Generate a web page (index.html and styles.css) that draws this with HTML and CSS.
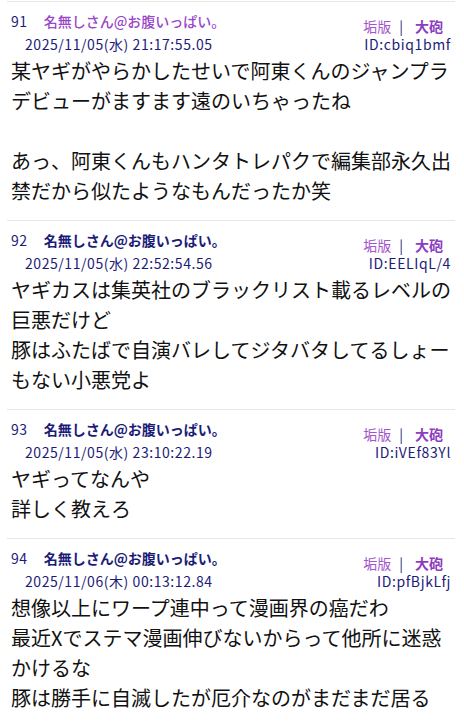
FILE: index.html
```html
<!DOCTYPE html>
<html lang="ja">
<head>
<meta charset="utf-8">
<title>thread</title>
<link rel="stylesheet" href="styles.css">
</head>
<body>
<div class="thread">
  <div class="post">
    <div class="head">
      <div class="meta">
        <div class="line1"><span class="num">91</span><span class="name name-mail">名無しさん@お腹いっぱい。</span></div>
        <div class="date">2025/11/05(水) 21:17:55.05</div>
      </div>
      <div class="side">
        <div class="links"><span class="l1">垢版</span><span class="bar">|</span><span class="l2">大砲</span></div>
        <div class="uid">ID:cbiq1bmf</div>
      </div>
    </div>
    <div class="body">某ヤギがやらかしたせいで阿東くんのジャンプラ<br>デビューがますます遠のいちゃったね<br><br>あっ、阿東くんもハンタトレパクで編集部永久出<br>禁だから似たようなもんだったか笑</div>
  </div>
  <div class="post">
    <div class="head">
      <div class="meta">
        <div class="line1"><span class="num">92</span><span class="name">名無しさん@お腹いっぱい。</span></div>
        <div class="date">2025/11/05(水) 22:52:54.56</div>
      </div>
      <div class="side">
        <div class="links"><span class="l1">垢版</span><span class="bar">|</span><span class="l2">大砲</span></div>
        <div class="uid">ID:EELIqL/4</div>
      </div>
    </div>
    <div class="body">ヤギカスは集英社のブラックリスト載るレベルの<br>巨悪だけど<br>豚はふたばで自演バレしてジタバタしてるしょー<br>もない小悪党よ</div>
  </div>
  <div class="post">
    <div class="head">
      <div class="meta">
        <div class="line1"><span class="num">93</span><span class="name">名無しさん@お腹いっぱい。</span></div>
        <div class="date">2025/11/05(水) 23:10:22.19</div>
      </div>
      <div class="side">
        <div class="links"><span class="l1">垢版</span><span class="bar">|</span><span class="l2">大砲</span></div>
        <div class="uid">ID:iVEf83Yl</div>
      </div>
    </div>
    <div class="body">ヤギってなんや<br>詳しく教えろ</div>
  </div>
  <div class="post">
    <div class="head">
      <div class="meta">
        <div class="line1"><span class="num">94</span><span class="name">名無しさん@お腹いっぱい。</span></div>
        <div class="date">2025/11/06(木) 00:13:12.84</div>
      </div>
      <div class="side">
        <div class="links"><span class="l1">垢版</span><span class="bar">|</span><span class="l2">大砲</span></div>
        <div class="uid">ID:pfBjkLfj</div>
      </div>
    </div>
    <div class="body">想像以上にワープ連中って漫画界の癌だわ<br>最近Xでステマ漫画伸びないからって他所に迷惑<br>かけるな<br>豚は勝手に自滅したが厄介なのがまだまだ居る</div>
  </div>
</div>
</body>
</html>
```
FILE: styles.css
```css
html, body {
  margin: 0;
  padding: 0;
  background: #ffffff;
}

body {
  font-family: "Noto Sans CJK JP", "Noto Sans", sans-serif;
  color: #111111;
}

.thread {
  margin: 0 9px 0 7px;
  padding-top: 1px;
}

.post {
  border-top: 1px solid #e6e6e6;
  padding: 7px 4px 14px 4px;
}

.head {
  display: flex;
  justify-content: space-between;
  align-items: flex-start;
  color: #1c1c78;
  font-size: 14px;
}

.line1 {
  line-height: 24px;
  white-space: nowrap;
}

.num {
  display: inline-block;
  letter-spacing: 0.6px;
  margin-right: 16px;
}

.name {
  font-weight: bold;
  color: #1c1c78;
}

.name-mail {
  font-weight: 500;
  color: #9a46c8;
}

.date {
  line-height: 23px;
  margin-left: 14px;
  letter-spacing: 0.56px;
  white-space: nowrap;
}

.side {
  padding-top: 9px;
  display: flex;
  flex-direction: column;
  align-items: flex-end;
  line-height: 17.5px;
}

.links {
  padding-right: 8px;
  white-space: nowrap;
}

.l1 {
  color: #a455cc;
}

.bar {
  color: #1c1c78;
  margin: 0 12px 0 8px;
}

.l2 {
  color: #8c3cc0;
  font-weight: bold;
}

.uid {
  letter-spacing: 0.62px;
  white-space: nowrap;
}

.body {
  font-size: 20px;
  line-height: 30px;
  white-space: nowrap;
  color: #111111;
}
```
